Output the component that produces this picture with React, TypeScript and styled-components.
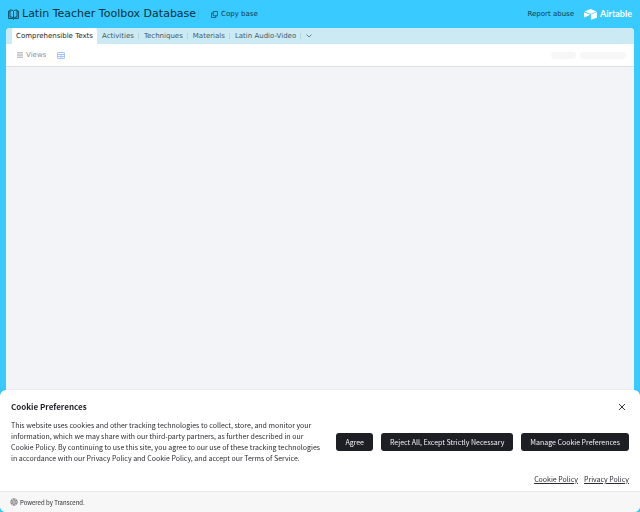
import React from "react";
import styled, { createGlobalStyle } from "styled-components";

const Global = createGlobalStyle`
  * { box-sizing: border-box; }
  body { margin: 0; background: #39caff; font-family: "DejaVu Sans", sans-serif; }
  button { font: inherit; border: 0; background: none; padding: 0; margin: 0; cursor: pointer; color: inherit; }
  a { color: inherit; }
  svg { display: block; flex: none; }
`;

const Page = styled.div`
  min-height: 100vh;
  display: flex;
  flex-direction: column;
  background: #39caff;
`;

const Header = styled.header`
  height: 28px;
  padding: 0 8px;
  display: flex;
  align-items: center;
  color: #0f4052;
  font-size: 7px;
`;

const Title = styled.h1`
  margin: 0 0 0 3px;
  font-size: 11px;
  line-height: 16px;
  font-weight: 400;
  color: #0b2f3d;
  white-space: nowrap;
`;

const HeaderDivider = styled.span`
  width: 1px;
  height: 10px;
  margin: 0 12px 0 2px;
  background: #34bff1;
`;

const CopyButton = styled.button`
  display: flex;
  align-items: center;
  gap: 3px;
  white-space: nowrap;
`;

const HeaderRight = styled.div`
  margin-left: auto;
  display: flex;
  align-items: center;
  gap: 10px;
`;

const ReportLink = styled.a`
  text-decoration: none;
  white-space: nowrap;
`;

const Brand = styled.a`
  display: flex;
  align-items: center;
  gap: 3px;
  color: #fff;
  text-decoration: none;
  font: 700 9px/14px Lato, sans-serif;
`;

const Base = styled.main`
  flex: 1;
  margin: 0 6px;
  display: flex;
  flex-direction: column;
  background: #f2f4f8;
  border-radius: 4px 4px 0 0;
  overflow: hidden;
`;

const Tabs = styled.nav`
  height: 16px;
  padding-left: 6px;
  display: flex;
  align-items: stretch;
  background: #cceaf4;
`;

const Tab = styled.button<{ $active?: boolean }>`
  padding: ${(p) => (p.$active ? "0 4px" : "0 4px 0 5px")};
  font-size: 7px;
  line-height: 16px;
  white-space: nowrap;
  border-radius: 2px 2px 0 0;
  color: ${(p) => (p.$active ? "#1d1f25" : "#46585f")};
  background: ${(p) => (p.$active ? "#fff" : "transparent")};
`;

const TabDivider = styled.span`
  width: 1px;
  height: 6px;
  align-self: center;
  background: #b9d5de;
`;

const MoreTabs = styled.button`
  display: flex;
  align-items: center;
  padding: 0 5px;
  color: #52666e;
`;

const ViewBar = styled.div`
  height: 23px;
  padding: 0 8px 0 11px;
  display: flex;
  align-items: center;
  gap: 11px;
  background: #fff;
  border-bottom: 1px solid #dcdde1;
`;

const ViewsButton = styled.button`
  display: flex;
  align-items: center;
  gap: 3px;
  font-size: 7px;
  color: #8e8f92;
`;

const Placeholders = styled.div`
  margin-left: auto;
  display: flex;
  gap: 4px;
`;

const Placeholder = styled.span<{ $wide?: boolean }>`
  width: ${(p) => (p.$wide ? "46px" : "25px")};
  height: 7px;
  border-radius: 4px;
  background: #f7f7f8;
`;

const Banner = styled.section`
  position: fixed;
  left: 0;
  right: 0;
  bottom: 0;
  background: #fff;
  border-radius: 6px;
  overflow: hidden;
  color: #2b2c31;
  font: 400 7px/11px "Noto Sans CJK SC", sans-serif;
  box-shadow: 0 0 2px rgba(0, 0, 0, 0.12);
`;

const BannerBody = styled.div`
  padding: 10px 11px 6px;
`;

const BannerTop = styled.div`
  display: flex;
  align-items: center;
  justify-content: space-between;
  height: 14px;
`;

const BannerTitle = styled.h2`
  margin: 0;
  font-size: 8px;
  line-height: 14px;
  font-weight: 700;
  color: #1d1f25;
`;

const CloseButton = styled.button`
  display: flex;
  padding: 3px;
  color: #33343a;
`;

const BannerMain = styled.div`
  display: flex;
  align-items: center;
  gap: 12px;
  margin-top: 6px;
`;

const Message = styled.p`
  flex: 1;
  margin: 0;
`;

const Actions = styled.div`
  display: flex;
  gap: 8px;
`;

const Action = styled.button`
  height: 18px;
  padding: 0 9px;
  border-radius: 3px;
  background: #1d1f25;
  color: #f0f0f2;
  white-space: nowrap;
`;

const Policies = styled.div`
  display: flex;
  justify-content: flex-end;
  gap: 6px;
  margin-top: 10px;
`;

const Footer = styled.footer`
  height: 21px;
  padding: 0 10px;
  display: flex;
  align-items: center;
  gap: 2px;
  background: #f7f7f7;
  border-top: 1px solid #eaeaea;
  font-size: 6px;
`;

const BookIcon = () => (
  <svg width="11" height="11" viewBox="0 0 11 11" fill="none" stroke="currentColor" strokeWidth="0.9" strokeLinejoin="round" aria-hidden="true">
    <path d="M5.500 2.200C4.800 1.300 3.600 1 2 1V8C3.600 8 4.800 8.300 5.500 9.200C6.200 8.300 7.400 8 9 8V1C7.400 1 6.200 1.300 5.500 2.200V9.200" />
    <path d="M2 2H0.600V9.500H4.500L5.500 10.300L6.500 9.500H10.400V2H9" />
  </svg>
);

const CopyIcon = () => (
  <svg width="7" height="7" viewBox="0 0 7 7" fill="none" stroke="currentColor" strokeWidth="0.7" strokeLinejoin="round" aria-hidden="true">
    <path d="M2.200 0.500H6.500V4.800H2.200Z" />
    <path d="M2.200 2H0.500V6.500H4.800V4.800" />
  </svg>
);

const AirtableMark = () => (
  <svg width="13" height="11" viewBox="0 0 200 170" fill="currentColor" aria-hidden="true">
    <path d="M90 4 16 34c-4 2-4 8 0 9l75 30c6 3 14 3 20 0l74-30c4-1 4-7 0-9L111 4c-7-3-14-3-21 0Z" />
    <path d="M106 88v74c0 4 4 6 7 5l83-32c2-1 4-3 4-5V56c0-4-4-6-7-5l-83 32c-2 1-4 3-4 5Z" />
    <path d="m88 92-25 12-58 28c-2 1-5-1-5-4V58c0-4 4-6 7-5l79 31c4 2 5 6 2 8Z" />
  </svg>
);

const Chevron = () => (
  <svg width="6" height="4" viewBox="0 0 6 4" fill="none" stroke="currentColor" strokeWidth="0.8" aria-hidden="true">
    <path d="m0.600 0.600 2.400 2.400 2.400-2.400" />
  </svg>
);

const ListIcon = () => (
  <svg width="6" height="6" viewBox="0 0 6 6" stroke="#b0b1b3" strokeWidth="0.9" aria-hidden="true">
    <path d="M0 0.600H6M0 2.200H6M0 3.800H6M0 5.400H6" />
  </svg>
);

const GridIcon = () => (
  <svg width="8" height="7" viewBox="0 0 8 7" fill="none" stroke="#a6c2fb" strokeWidth="1" aria-label="Grid view">
    <rect x="0.500" y="0.500" width="7" height="6" rx="0.600" />
    <path d="M0.500 2.500H7.500M0.500 4.500H7.500M4 2.500V6.500" />
  </svg>
);

const CloseIcon = () => (
  <svg width="8" height="8" viewBox="0 0 8 8" stroke="currentColor" strokeWidth="1" aria-hidden="true">
    <path d="m1 1 6 6M7 1 1 7" />
  </svg>
);

const TranscendIcon = () => (
  <svg width="8" height="8" viewBox="0 0 8 8" fill="none" stroke="#55565b" strokeWidth="0.500" aria-hidden="true">
    <circle cx="4" cy="4" r="3.500" strokeDasharray="1.400 0.430" />
    <circle cx="4" cy="4" r="2.500" />
    <circle cx="4" cy="4" r="1.200" />
    <path d="M4 0.500V2.800M4 5.200V7.500M1 2.200 3 3.400M5 4.600 7 5.800M1 5.800 3 4.600M5 3.400 7 2.200" />
  </svg>
);

const tables = ["Activities", "Techniques", "Materials", "Latin Audio-Video"];

export default function App() {
  return (
    <Page>
      <Global />
      <Header>
        <BookIcon />
        <Title>Latin Teacher Toolbox Database</Title>
        <HeaderDivider />
        <CopyButton type="button"><CopyIcon />Copy base</CopyButton>
        <HeaderRight>
          <ReportLink href="#report">Report abuse</ReportLink>
          <Brand href="#airtable"><AirtableMark />Airtable</Brand>
        </HeaderRight>
      </Header>
      <Base>
        <Tabs>
          <Tab type="button" $active>Comprehensible Texts</Tab>
          {tables.map((name) => (
            <React.Fragment key={name}>
              <Tab type="button">{name}</Tab>
              <TabDivider />
            </React.Fragment>
          ))}
          <MoreTabs type="button" aria-label="More tables"><Chevron /></MoreTabs>
        </Tabs>
        <ViewBar>
          <ViewsButton type="button"><ListIcon />Views</ViewsButton>
          <GridIcon />
          <Placeholders><Placeholder /><Placeholder $wide /></Placeholders>
        </ViewBar>
      </Base>
      <Banner aria-labelledby="cookie-title">
        <BannerBody>
          <BannerTop>
            <BannerTitle id="cookie-title">Cookie Preferences</BannerTitle>
            <CloseButton type="button" aria-label="Close"><CloseIcon /></CloseButton>
          </BannerTop>
          <BannerMain>
            <Message>
              This website uses cookies and other tracking technologies to collect, store, and monitor your
              information, which we may share with our third-party partners, as further described in our Cookie
              Policy. By continuing to use this site, you agree to our use of these tracking technologies in
              accordance with our Privacy Policy and Cookie Policy, and accept our Terms of Service.
            </Message>
            <Actions>
              <Action type="button">Agree</Action>
              <Action type="button">Reject All, Except Strictly Necessary</Action>
              <Action type="button">Manage Cookie Preferences</Action>
            </Actions>
          </BannerMain>
          <Policies>
            <a href="#cookie-policy">Cookie Policy</a>
            <a href="#privacy-policy">Privacy Policy</a>
          </Policies>
        </BannerBody>
        <Footer><TranscendIcon />Powered by Transcend.</Footer>
      </Banner>
    </Page>
  );
}
